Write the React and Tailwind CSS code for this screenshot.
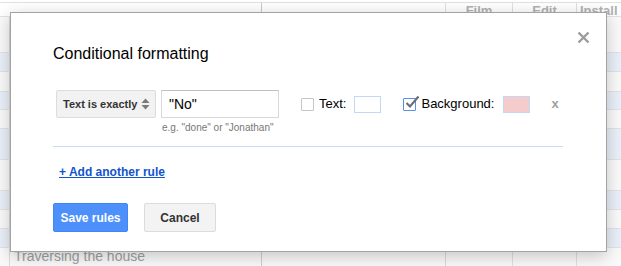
import React from "react";

function Row({ h, blue, children }) {
  return (
    <div className={`flex border-b border-[#e3e3e3] ${h} ${blue ? "bg-[#eaf0f9]" : "bg-[#fafafa]"}`}>
      <div className="w-[10px] shrink-0 border-r border-[#dadada]" />
      <div className="w-[252px] shrink-0 border-r border-[#cfcfcf] pl-[4px] text-[14px] leading-[17px] text-[#a0a0a0] whitespace-nowrap">{children}</div>
      <div className="w-[184px] shrink-0 border-r border-[#dadada]" />
      <div className="w-[67px] shrink-0 border-r border-[#e0e0e0]" />
      <div className="w-[64px] shrink-0 border-r border-[#e0e0e0]" />
      <div className="flex-1" />
    </div>
  );
}

export default function App() {
  return (
    <div
      className="relative w-[621px] h-[266px] overflow-hidden bg-white"
      style={{ fontFamily: '"Liberation Sans", Arial, sans-serif' }}
    >
      {/* background spreadsheet */}
      <div className="flex flex-col">
        <div className="pt-[2px]">
          <div className="flex h-[15px] border-t border-b border-[#e2e2e2] bg-white text-[13px] font-bold leading-[15px] text-[#b2b2b2]">
            <div className="w-[262px] shrink-0 border-r border-[#c8c8c8]" />
            <div className="w-[184px] shrink-0 border-r border-[#e0e0e0]" />
            <div className="w-[67px] shrink-0 border-r border-[#e0e0e0] text-center">Film</div>
            <div className="w-[64px] shrink-0 border-r border-[#e0e0e0] text-center">Edit</div>
            <div className="min-w-0 flex-1 overflow-hidden pl-[3px] whitespace-nowrap">Install</div>
          </div>
        </div>
        <Row h="h-[36px]" />
        <Row h="h-[19px]" blue />
        <Row h="h-[20px]" />
        <Row h="h-[18px]" blue />
        <Row h="h-[19px]" />
        <Row h="h-[31px]" blue />
        <Row h="h-[31px]" />
        <Row h="h-[19px]" blue />
        <Row h="h-[19px]" />
        <Row h="h-[19px]" blue />
        <Row h="h-[19px]">Traversing the house</Row>
      </div>

      {/* dialog */}
      <div className="absolute left-[10px] top-[12px] w-[597px] h-[240px] border border-[#a3a3a3] bg-white shadow-[0_4px_16px_rgba(0,0,0,0.22)]">
        <svg className="absolute right-[16px] top-[18px]" width="13" height="13" viewBox="0 0 13 13">
          <path d="M1.5 1.5 L11.5 11.5 M11.5 1.5 L1.5 11.5" stroke="#9b9b9b" strokeWidth="2.4" strokeLinecap="butt" />
        </svg>

        <div className="pl-[42px] pr-[43px] pt-[31px]">
          <div className="text-[16px] leading-[20px] text-black">Conditional formatting</div>

          <div className="mt-[26px] flex items-start pl-[3px]">
            <div className="flex h-[28px] w-[100px] shrink-0 items-center justify-between rounded-[2px] border border-[#dcdcdc] bg-[#f2f2f2] pl-[6px] pr-[5px]">
              <span className="shrink-0 whitespace-nowrap text-[11px] font-bold text-[#333]">Text is exactly</span>
              <svg className="shrink-0" width="9" height="12" viewBox="0 0 9 12">
                <path d="M4.5 0.5 L8.5 5 L0.5 5 Z" fill="#7a7a7a" />
                <path d="M0.5 7 L8.5 7 L4.5 11.5 Z" fill="#7a7a7a" />
              </svg>
            </div>
            <div className="ml-[5px] flex shrink-0 flex-col">
              <div className="flex h-[28px] w-[118px] items-center border border-[#d9d9d9] border-t-[#c0c0c0] bg-white pl-[7px] text-[14px] text-black">
                "No"
              </div>
              <div className="mt-[4px] pl-[1px] text-[10px] leading-[12px] text-[#777] whitespace-nowrap">
                e.g. "done" or "Jonathan"
              </div>
            </div>

            <div className="ml-[22px] flex h-[28px] items-center">
              <div className="h-[13px] w-[13px] rounded-[1px] border border-[#c6c6c6] bg-white" />
              <span className="ml-[5px] text-[13px] text-black">Text:</span>
              <div className="ml-[8px] h-[17px] w-[27px] border border-[#c3d7f7] bg-white" />

              <div className="relative ml-[22px] h-[13px] w-[13px] rounded-[1px] border border-[#5a8fe6] bg-white">
                <svg className="absolute left-[1px] top-[-4px]" width="15" height="15" viewBox="0 0 15 15">
                  <path d="M1.5 8 L5 11.5 L13.5 1.5" stroke="#6e6e6e" strokeWidth="2.2" fill="none" />
                </svg>
              </div>
              <span className="ml-[5px] text-[13px] text-black">Background:</span>
              <div className="ml-[9px] h-[17px] w-[27px] border border-[#c3d7f7] bg-[#f4cccc]" />
              <span className="ml-[21px] text-[13px] font-bold text-[#a0a0a0]">x</span>
            </div>
          </div>

          <div className="mt-[12px] h-px w-[510px] bg-[#c9dcfa]" />

          <div className="mt-[12px] pl-[6px]">
            <span className="text-[12px] font-bold leading-[14px] text-[#1155cc] underline">+ Add another rule</span>
          </div>

          <div className="mt-[20px] flex">
            <div className="flex h-[29px] w-[75px] items-center justify-center rounded-[2px] border border-[#3f86f8] bg-[#4d8ffb] text-[12px] font-bold text-white">
              Save rules
            </div>
            <div className="ml-[16px] flex h-[29px] w-[72px] items-center justify-center rounded-[2px] border border-[#dcdcdc] bg-[#f3f3f3] text-[12px] font-bold text-[#333]">
              Cancel
            </div>
          </div>
        </div>
      </div>
    </div>
  );
}
